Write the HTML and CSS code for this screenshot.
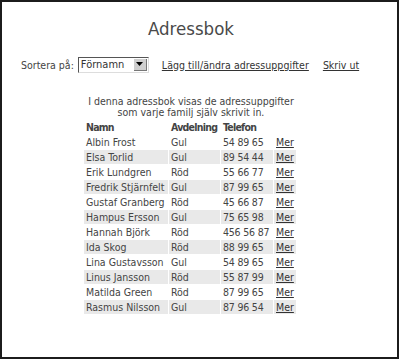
FILE: index.html
```html
<!DOCTYPE html>
<html lang="sv">
<head>
<meta charset="utf-8">
<title>Adressbok</title>
<link rel="stylesheet" href="styles.css">
</head>
<body>
<div class="frame">
  <div class="page">
    <h1 class="title">Adressbok</h1>
    <div class="sortbar">
      <span class="sortlabel">Sortera på:</span>
      <span class="select">
        <span class="select-value">Förnamn</span>
        <span class="select-btn"><svg width="7" height="4" viewBox="0 0 7 4"><path d="M0 0H7L3.5 4Z" fill="#000"/></svg></span>
      </span>
      <a class="link link-add" href="#">Lägg till/ändra adressuppgifter</a>
      <a class="link link-print" href="#">Skriv ut</a>
    </div>
    <p class="intro">I denna adressbok visas de adressuppgifter<br>som varje familj själv skrivit in.</p>
    <table class="book">
      <thead>
        <tr><th class="c-name">Namn</th><th class="c-dep">Avdelning</th><th class="c-tel">Telefon</th><th class="c-mer"></th></tr>
      </thead>
      <tbody>
        <tr><td>Albin Frost</td><td>Gul</td><td>54 89 65</td><td><a class="link" href="#">Mer</a></td></tr>
        <tr class="alt"><td>Elsa Torlid</td><td>Gul</td><td>89 54 44</td><td><a class="link" href="#">Mer</a></td></tr>
        <tr><td>Erik Lundgren</td><td>Röd</td><td>55 66 77</td><td><a class="link" href="#">Mer</a></td></tr>
        <tr class="alt"><td>Fredrik Stjärnfelt</td><td>Gul</td><td>87 99 65</td><td><a class="link" href="#">Mer</a></td></tr>
        <tr><td>Gustaf Granberg</td><td>Röd</td><td>45 66 87</td><td><a class="link" href="#">Mer</a></td></tr>
        <tr class="alt"><td>Hampus Ersson</td><td>Gul</td><td>75 65 98</td><td><a class="link" href="#">Mer</a></td></tr>
        <tr><td>Hannah Björk</td><td>Röd</td><td>456 56 87</td><td><a class="link" href="#">Mer</a></td></tr>
        <tr class="alt"><td>Ida Skog</td><td>Röd</td><td>88 99 65</td><td><a class="link" href="#">Mer</a></td></tr>
        <tr><td>Lina Gustavsson</td><td>Gul</td><td>54 89 65</td><td><a class="link" href="#">Mer</a></td></tr>
        <tr class="alt"><td>Linus Jansson</td><td>Röd</td><td>55 87 99</td><td><a class="link" href="#">Mer</a></td></tr>
        <tr><td>Matilda Green</td><td>Röd</td><td>87 99 65</td><td><a class="link" href="#">Mer</a></td></tr>
        <tr class="alt"><td>Rasmus Nilsson</td><td>Gul</td><td>87 96 54</td><td><a class="link" href="#">Mer</a></td></tr>
      </tbody>
    </table>
  </div>
</div>
</body>
</html>
```
FILE: styles.css
```css
html, body {
  margin: 0;
  padding: 0;
  background: #fff;
}
body {
  font-family: "DejaVu Sans Condensed", "DejaVu Sans", sans-serif;
  font-stretch: condensed;
  font-size: 10.5px;
  color: #444;
}
.frame {
  width: 399px;
  height: 359px;
  box-sizing: border-box;
  border: 2px solid #1c1c1c;
}
.page {
  width: 378px;
}
.title {
  margin: 15px 0 0;
  font-size: 18.5px;
  font-weight: normal;
  line-height: 24px;
  text-align: center;
  color: #4a4a4a;
}
.sortbar {
  display: flex;
  align-items: center;
  margin-top: 15px;
  padding-left: 19px;
  height: 17px;
}
.select {
  display: flex;
  align-items: stretch;
  margin-left: 4px;
  width: 71px;
  height: 16px;
  box-sizing: border-box;
  border-top: 1px solid #555;
  border-left: 1px solid #555;
  border-right: 1px solid #ddd;
  border-bottom: 1px solid #ddd;
  background: #fff;
}
.select-value {
  flex: 1;
  padding-left: 2px;
  line-height: 14px;
  color: #333;
  font-size: 11px;
}
.select-btn {
  display: flex;
  align-items: center;
  justify-content: center;
  width: 12px;
  margin: 1px;
  background: #cfcfcf;
  border-right: 1px solid #777;
  border-bottom: 1px solid #777;
}
.link {
  color: #333;
  text-decoration: underline;
}
.link-add {
  margin-left: 13px;
  letter-spacing: 0.05px;
}
.link-print {
  margin-left: 14px;
}
.intro {
  margin: 23px 0 0;
  text-align: center;
  line-height: 11px;
}
.book {
  margin: 1px 0 0 81px;
  border-collapse: separate;
  border-spacing: 1px;
  text-align: left;
}
.book th, .book td {
  height: 14px;
  padding: 0 2px;
  line-height: 14px;
  white-space: nowrap;
}
.book th {
  font-weight: bold;
  color: #444;
  letter-spacing: -0.75px;
}
.c-name { width: 80px; }
.c-dep { width: 47px; }
.c-tel { width: 48px; }
.c-mer { width: 17px; }
.book td:nth-child(3) {
  letter-spacing: -0.2px;
}
.book tr.alt td {
  background: #e9e9e9;
}
```
